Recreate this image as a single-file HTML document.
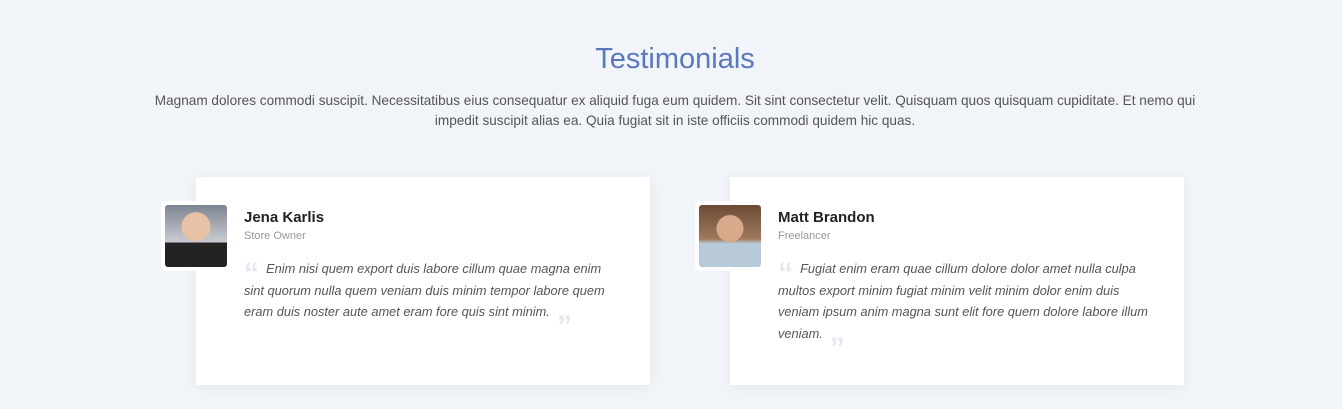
<!DOCTYPE html>
<html><head><meta charset="utf-8"><style>
body{margin:0;width:1342px;height:409px;background:#f1f4f9;font-family:"Liberation Sans",sans-serif;position:relative;overflow:hidden}
h2{position:absolute;top:43px;left:0;width:1350px;text-align:center;margin:0;font-weight:400;font-size:29px;color:#5a78bd}
.intro{position:absolute;top:91px;left:146px;width:1058px;text-align:center;font-size:13.6px;line-height:19.5px;color:#555;margin:0}
.card{position:absolute;top:177px;width:454px;height:208px;background:#fff;box-shadow:0 2px 12px rgba(0,0,0,.06)}
.pic{position:absolute;top:24px;left:-35px;width:62px;height:62px;border:4px solid #fff;border-radius:6px;overflow:hidden;background:#fff}
.pic div{width:62px;height:62px;border-radius:3px}
.name{position:absolute;left:48px;top:32px;font-size:15px;font-weight:bold;color:#222}
.role{position:absolute;left:48px;top:53px;font-size:11px;color:#999}
.q{position:absolute;left:48px;top:81px;width:374px;font-size:12.8px;font-style:italic;color:#555;line-height:21.5px;margin:0}
.qo{color:#e2e7f0;font-size:30px;font-weight:bold;font-style:normal;font-family:"Liberation Sans",sans-serif;line-height:0;vertical-align:-10px}
</style></head><body>
<h2>Testimonials</h2>
<p class="intro">Magnam dolores commodi suscipit. Necessitatibus eius consequatur ex aliquid fuga eum quidem. Sit sint consectetur velit. Quisquam quos quisquam cupiditate. Et nemo qui impedit suscipit alias ea. Quia fugiat sit in iste officiis commodi quidem hic quas.</p>
<div class="card" style="left:196px">
 <div class="pic"><div style="background:radial-gradient(circle at 50% 35%,#e8c2a6 0 14px,transparent 15px),linear-gradient(180deg,#7d8390,#c9ccd3 60%,#222 61%)"></div></div>
 <div class="name">Jena Karlis</div><div class="role">Store Owner</div>
 <p class="q"><span class="qo">“</span>&nbsp;&nbsp;Enim nisi quem export duis labore cillum quae magna enim sint quorum nulla quem veniam duis minim tempor labore quem eram duis noster aute amet eram fore quis sint minim. &nbsp;<span class="qo" style="vertical-align:-20px">”</span></p>
</div>
<div class="card" style="left:730px">
 <div class="pic"><div style="background:radial-gradient(circle at 50% 38%,#d9a98c 0 13px,transparent 14px),linear-gradient(180deg,#6b4a36,#a07a5d 55%,#b8c9d8 62%)"></div></div>
 <div class="name">Matt Brandon</div><div class="role">Freelancer</div>
 <p class="q"><span class="qo">“</span>&nbsp;&nbsp;Fugiat enim eram quae cillum dolore dolor amet nulla culpa multos export minim fugiat minim velit minim dolor enim duis veniam ipsum anim magna sunt elit fore quem dolore labore illum veniam. &nbsp;<span class="qo" style="vertical-align:-20px">”</span></p>
</div>
</body></html>
